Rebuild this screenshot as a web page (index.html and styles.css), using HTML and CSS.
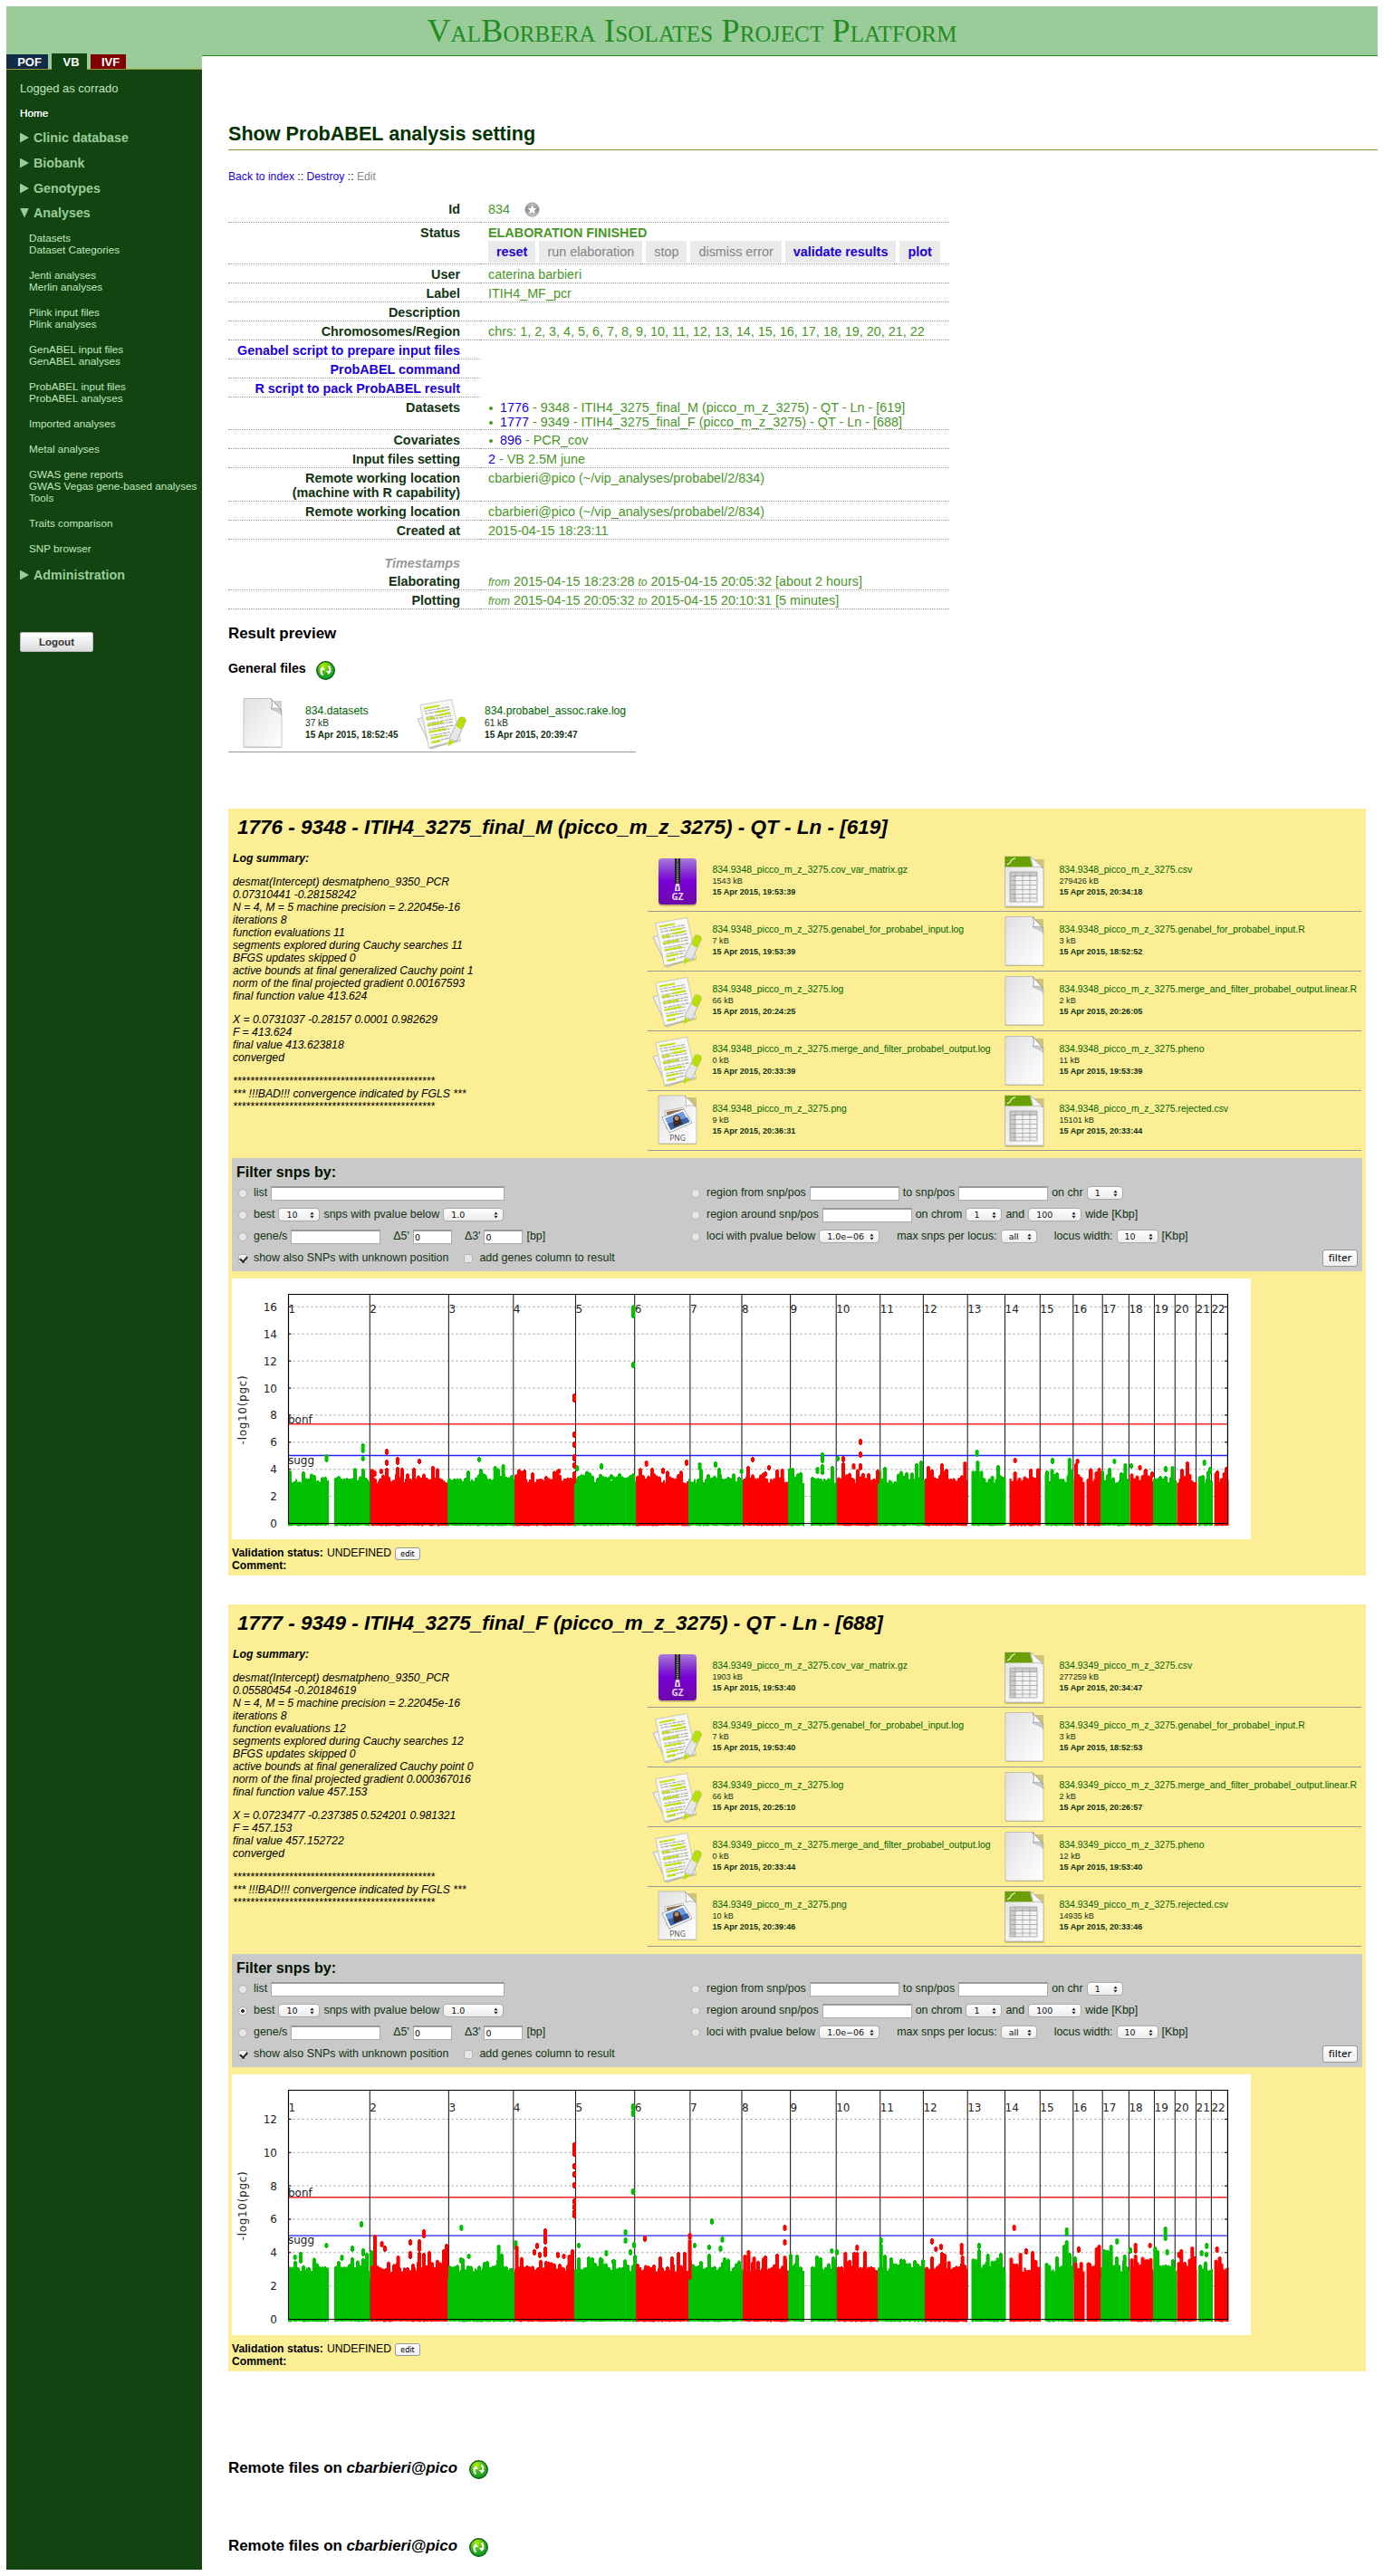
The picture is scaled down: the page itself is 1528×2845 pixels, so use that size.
FILE: index.html
```html
<!DOCTYPE html>
<html lang="en">
<head>
<meta charset="utf-8">
<title>ValBorbera Isolates Project Platform</title>
<link rel="stylesheet" href="styles.css">
</head>
<body>
<svg class="sprite" aria-hidden="true">
  <defs>
    <linearGradient id="paper" x1="0" y1="0" x2="1" y2="1"><stop offset="0" stop-color="#e0e0e0"/><stop offset=".45" stop-color="#efefef"/><stop offset="1" stop-color="#fff"/></linearGradient>
    <linearGradient id="purple" x1="0" y1="0" x2="0" y2="1"><stop offset="0" stop-color="#a87bdc"/><stop offset=".28" stop-color="#8634d2"/><stop offset=".5" stop-color="#7b00d8"/><stop offset="1" stop-color="#6c0aa6"/></linearGradient>
    <radialGradient id="lime" cx=".4" cy=".25" r=".8"><stop offset="0" stop-color="#b4f000"/><stop offset=".5" stop-color="#3fb51c"/><stop offset="1" stop-color="#00962c"/></radialGradient>
    <linearGradient id="silver" x1="0" y1="0" x2="0" y2="1"><stop offset="0" stop-color="#c8c8c8"/><stop offset=".5" stop-color="#8c8c8c"/><stop offset="1" stop-color="#cfcfcf"/></linearGradient>
    <symbol id="doc" viewBox="0 0 58 58">
      <path d="M8 4h42v52H8z" fill="#000" opacity=".18"/>
      <path d="M8 1.500h30L50 15v40H8z" fill="url(#paper)" stroke="#b0b0a8" stroke-width=".7"/>
      <path d="M38 1.500c2 4 1.500 8 .5 11.500 4-1.500 8-1 11.500 2z" fill="#fff" stroke="#8c8c8c" stroke-width=".8"/>
      <path d="M38 13.500c4-1 8-1 12 2v5c-3-4-8-5-12-7z" fill="#777" opacity=".35"/>
    </symbol>
    <symbol id="log" viewBox="0 -1 60 60">
      <path d="M2 24l12-4 26 30-22 8z" fill="#efefef" stroke="#aaa" stroke-width=".8"/>
      <path d="M5 8L40 2l12 48-37 8z" fill="#000" opacity=".13"/>
      <path d="M5 8L41 1.500l10 46-36 9z" fill="#f7f7f5" stroke="#b8b8b0" stroke-width=".7"/>
      <g stroke="#aaa" stroke-width="1.200" stroke-dasharray="3 1 5 1">
        <path d="M10 15l28-5M11 18l28-5M12 22l28-5M13 25l28-5M14 29l28-5M14 32l28-5M15 36l28-5M16 39l24-4M17 43l22-4M18 46l20-4M19 50l18-4"/>
      </g>
      <path d="M9 12l18-3.500M23 16l12-2M12 24l10-2M25 20l14-3M13 31l18-3.500M15 39l20-4M17 46l14-3M18 51l10-2" stroke="#c3e012" stroke-width="2.200"/>
      <path d="M50 22c5-1 8 1 7 5L46 50l-8-4z" fill="#e6e7e7" stroke="#999" stroke-width=".7"/>
      <path d="M50 22c5-1 8 1 7 5l-5 9-6-4z" fill="#b5e000"/>
      <path d="M38 47l6 3.500-7 4.500z" fill="#b5e000"/>
    </symbol>
    <symbol id="gz" viewBox="0 0 58 58">
      <rect x="8" y="4" width="42" height="52" rx="4" fill="#000" opacity=".2"/>
      <rect x="8" y="3" width="42" height="51" rx="4" fill="url(#purple)"/>
      <path d="M29 3v28" stroke="#222" stroke-width="6"/>
      <path d="M29 3v28" stroke="#999" stroke-width="2.200" stroke-dasharray="1.200 1"/>
      <path d="M27 31h4l1.200 8h-6.400z" fill="#d8cce4"/><path d="M28.300 34h1.400v4h-1.400z" fill="#5b0f95"/>
      <text x="29" y="49" class="gz-text" text-anchor="middle">GZ</text>
    </symbol>
    <symbol id="csv" viewBox="0 0 58 58">
      <path d="M7.500 4h43v54h-43z" fill="#000" opacity=".18"/>
      <path d="M7.500 1H36l14 13v42h-42.500z" fill="url(#paper)" stroke="#aaa" stroke-width=".7"/>
      <path d="M7.500 1H35l3 11.500H7.500z" fill="#6a9f08"/>
      <path d="M10 10l3-2 2-3.500 4-2" stroke="#e8f2c8" stroke-width="1.300" fill="none"/>
      <path d="M36 1l14 13c-4-2-8-2.500-11-1z" fill="#fafafa" stroke="#999" stroke-width=".6"/>
      <path d="M13 18h30v33H13z" fill="#f2f2f2"/>
      <path d="M13 18h30v4.500H13zM13 18h6v33h-6z" fill="#cacaca"/>
      <path d="M13 18h30v33H13zM19 18v33M27 18v33M35 18v33M13 22.500h30M13 27.500h30M13 32.500h30M13 37.500h30M13 42.500h30M13 47h30" fill="none" stroke="#a2a2a2" stroke-width=".8"/>
    </symbol>
    <symbol id="png" viewBox="0 0 58 58">
      <path d="M8 3h42v52H8z" fill="#000" opacity=".18"/>
      <path d="M8 1h29l13 13v40H8z" fill="url(#paper)" stroke="#b0b0a8" stroke-width=".7"/>
      <path d="M37 1c2 4 2 8 1 12 4-2 8-2 12 1z" fill="#fff" stroke="#999" stroke-width=".7"/>
      <path d="M15 18l20-4 4 20-22 4z" fill="#f2eee4" stroke="#999" stroke-width=".6"/><path d="M17 19l17-3 1 7-17 3z" fill="#8a6a50"/>
      <path d="M12 25l24-9 9 15-25 11z" fill="#fff" stroke="#888" stroke-width=".7"/>
      <path d="M15 26l20-7.500 7 11.500L21.500 39z" fill="#6d9be0"/><path d="M18 32l22-7 2.500 5-21 9z" fill="#3c62a8"/>
      <path d="M24 26c2-5 7-4 8 0l3 6-10 4z" fill="#3b2a24"/><circle cx="28" cy="26" r="2.500" fill="#bd8a67"/>
      <text x="29" y="50.500" class="png-text" text-anchor="middle">PNG</text>
    </symbol>
    <symbol id="refresh" viewBox="0 0 21 21">
      <circle cx="10.500" cy="10.500" r="9.800" fill="url(#lime)" stroke="#07520a" stroke-width="1.200"/>
      <path d="M7.500 15.500A5 5 0 0 1 6.500 9M13.500 5.500A5 5 0 0 1 14.500 12" fill="none" stroke="#fff" stroke-width="2"/>
      <path d="M3.800 10L7 6 10 10zM11 11h6.200L14 15z" fill="#fff"/>
    </symbol>
    <symbol id="star" viewBox="0 0 18 18">
      <circle cx="9" cy="9" r="8" fill="url(#silver)" stroke="#8a8a8a" stroke-width=".9"/>
      <path d="M9 3.800l1.600 3.400 3.700.4-2.800 2.500.8 3.700L9 12l-3.300 1.800.8-3.700-2.800-2.500 3.700-.4z" fill="#fff"/>
    </symbol>
    <symbol id="updown" viewBox="0 0 6 9"><path d="M.5 3.700L3 .3l2.500 3.400zM.5 5.300L3 8.700l2.500-3.400z" fill="#222"/></symbol>
  </defs>
</svg>

<header class="banner"><h1>ValBorbera Isolates Project Platform</h1></header>

<div class="page">
  <nav class="sidebar">
    <div class="tabs"><a class="tab pof">POF</a><a class="tab vb">VB</a><a class="tab ivf">IVF</a></div>
    <div class="menu">
      <p class="logged">Logged as corrado</p>
      <p class="home">Home</p>
      <h3><i class="tri"></i>Clinic database</h3>
      <h3><i class="tri"></i>Biobank</h3>
      <h3><i class="tri"></i>Genotypes</h3>
      <h3 class="open"><i class="tri down"></i>Analyses</h3>
      <ul><li>Datasets</li><li>Dataset Categories</li></ul>
      <ul><li>Jenti analyses</li><li>Merlin analyses</li></ul>
      <ul><li>Plink input files</li><li>Plink analyses</li></ul>
      <ul><li>GenABEL input files</li><li>GenABEL analyses</li></ul>
      <ul><li>ProbABEL input files</li><li>ProbABEL analyses</li></ul>
      <ul><li>Imported analyses</li></ul>
      <ul><li>Metal analyses</li></ul>
      <ul><li>GWAS gene reports</li><li>GWAS Vegas gene-based analyses</li><li>Tools</li></ul>
      <ul><li>Traits comparison</li></ul>
      <ul><li>SNP browser</li></ul>
      <h3 class="admin"><i class="tri"></i>Administration</h3>
      <button class="logout">Logout</button>
    </div>
  </nav>

  <main class="content">
    <h2 class="title">Show ProbABEL analysis setting</h2>
    <p class="links"><a>Back to index</a> :: <a>Destroy</a> :: <span class="off">Edit</span></p>

    <div class="details">
      <div class="row id"><div class="k">Id</div><div class="v">834<svg class="star"><use href="#star"/></svg></div></div>
      <div class="row status"><div class="k">Status</div><div class="v"><b>ELABORATION FINISHED</b>
        <div class="actions"><a>reset</a><span>run elaboration</span><span>stop</span><span>dismiss error</span><a>validate results</a><a>plot</a></div></div></div>
      <div class="row"><div class="k">User</div><div class="v">caterina barbieri</div></div>
      <div class="row"><div class="k">Label</div><div class="v">ITIH4_MF_pcr</div></div>
      <div class="row"><div class="k">Description</div><div class="v"></div></div>
      <div class="row"><div class="k">Chromosomes/Region</div><div class="v">chrs: 1, 2, 3, 4, 5, 6, 7, 8, 9, 10, 11, 12, 13, 14, 15, 16, 17, 18, 19, 20, 21, 22</div></div>
      <div class="row"><div class="k link">Genabel script to prepare input files</div></div>
      <div class="row"><div class="k link">ProbABEL command</div></div>
      <div class="row"><div class="k link">R script to pack ProbABEL result</div></div>
      <div class="row sets"><div class="k">Datasets</div><div class="v"><div class="item"><a>1776</a> - 9348 - ITIH4_3275_final_M (picco_m_z_3275) - QT - Ln - [619]</div><div class="item"><a>1777</a> - 9349 - ITIH4_3275_final_F (picco_m_z_3275) - QT - Ln - [688]</div></div></div>
      <div class="row"><div class="k">Covariates</div><div class="v"><div class="item"><a>896</a> - PCR_cov</div></div></div>
      <div class="row"><div class="k">Input files setting</div><div class="v"><a>2</a> - VB 2.5M june</div></div>
      <div class="row"><div class="k">Remote working location<br>(machine with R capability)</div><div class="v">cbarbieri@pico (~/vip_analyses/probabel/2/834)</div></div>
      <div class="row"><div class="k">Remote working location</div><div class="v">cbarbieri@pico (~/vip_analyses/probabel/2/834)</div></div>
      <div class="row"><div class="k">Created at</div><div class="v">2015-04-15 18:23:11</div></div>
      <div class="stamps">Timestamps</div>
      <div class="row"><div class="k">Elaborating</div><div class="v"><i>from</i> 2015-04-15 18:23:28 <i>to</i> 2015-04-15 20:05:32 [about 2 hours]</div></div>
      <div class="row"><div class="k">Plotting</div><div class="v"><i>from</i> 2015-04-15 20:05:32 <i>to</i> 2015-04-15 20:10:31 [5 minutes]</div></div>
    </div>

    <h3 class="preview">Result preview</h3>
    <h4 class="general">General files<svg class="refresh"><use href="#refresh"/></svg></h4>
    <div class="general-files">
      <div class="file"><svg><use href="#doc"/></svg><div><a>834.datasets</a><span>37 kB</span><b>15 Apr 2015, 18:52:45</b></div></div>
      <div class="file"><svg><use href="#log"/></svg><div><a>834.probabel_assoc.rake.log</a><span>61 kB</span><b>15 Apr 2015, 20:39:47</b></div></div>
    </div>

    <section class="panel">
      <h3>1776 - 9348 - ITIH4_3275_final_M (picco_m_z_3275) - QT - Ln - [619]</h3>
      <div class="summary">
        <div class="log">
          <p><b>Log summary:</b></p>
          <p>desmat(Intercept) desmatpheno_9350_PCR<br>0.07310441 -0.28158242<br>N = 4, M = 5 machine precision = 2.22045e-16<br>iterations 8<br>function evaluations 11<br>segments explored during Cauchy searches 11<br>BFGS updates skipped 0<br>active bounds at final generalized Cauchy point 1<br>norm of the final projected gradient 0.00167593<br>final function value 413.624</p>
          <p>X = 0.0731037 -0.28157 0.0001 0.982629<br>F = 413.624<br>final value 413.623818<br>converged</p>
          <p>***********************************************<br>*** !!!BAD!!! convergence indicated by FGLS ***<br>***********************************************</p>
        </div>
        <div class="files">
          <div class="file"><svg><use href="#gz"/></svg><div><a>834.9348_picco_m_z_3275.cov_var_matrix.gz</a><span>1543 kB</span><b>15 Apr 2015, 19:53:39</b></div></div>
          <div class="file"><svg><use href="#csv"/></svg><div><a>834.9348_picco_m_z_3275.csv</a><span>279426 kB</span><b>15 Apr 2015, 20:34:18</b></div></div>
          <div class="file"><svg><use href="#log"/></svg><div><a>834.9348_picco_m_z_3275.genabel_for_probabel_input.log</a><span>7 kB</span><b>15 Apr 2015, 19:53:39</b></div></div>
          <div class="file"><svg><use href="#doc"/></svg><div><a>834.9348_picco_m_z_3275.genabel_for_probabel_input.R</a><span>3 kB</span><b>15 Apr 2015, 18:52:52</b></div></div>
          <div class="file"><svg><use href="#log"/></svg><div><a>834.9348_picco_m_z_3275.log</a><span>66 kB</span><b>15 Apr 2015, 20:24:25</b></div></div>
          <div class="file"><svg><use href="#doc"/></svg><div><a>834.9348_picco_m_z_3275.merge_and_filter_probabel_output.linear.R</a><span>2 kB</span><b>15 Apr 2015, 20:26:05</b></div></div>
          <div class="file"><svg><use href="#log"/></svg><div><a>834.9348_picco_m_z_3275.merge_and_filter_probabel_output.log</a><span>0 kB</span><b>15 Apr 2015, 20:33:39</b></div></div>
          <div class="file"><svg><use href="#doc"/></svg><div><a>834.9348_picco_m_z_3275.pheno</a><span>11 kB</span><b>15 Apr 2015, 19:53:39</b></div></div>
          <div class="file"><svg><use href="#png"/></svg><div><a>834.9348_picco_m_z_3275.png</a><span>9 kB</span><b>15 Apr 2015, 20:36:31</b></div></div>
          <div class="file"><svg><use href="#csv"/></svg><div><a>834.9348_picco_m_z_3275.rejected.csv</a><span>15101 kB</span><b>15 Apr 2015, 20:33:44</b></div></div>
        </div>
      </div>
      <form class="filter">
        <h4>Filter snps by:</h4>
        <div class="cols">
          <div class="col">
            <div class="line"><i class="radio"></i>list<input class="w-list"></div>
            <div class="line"><i class="radio"></i>best<span class="select w46">10<svg><use href="#updown"/></svg></span>snps with pvalue below<span class="select w67">1.0<svg><use href="#updown"/></svg></span></div>
            <div class="line"><i class="radio"></i>gene/s<input class="w99"><span class="delta">Δ5'</span><input class="w43" value="0"><span class="delta">Δ3'</span><input class="w43" value="0">[bp]</div>
            <div class="line"><i class="check on"></i>show also SNPs with unknown position<i class="check second"></i>add genes column to result</div>
          </div>
          <div class="col">
            <div class="line"><i class="radio"></i>region from snp/pos<input class="w99">to snp/pos<input class="w99">on chr<span class="select w40">1<svg><use href="#updown"/></svg></span></div>
            <div class="line"><i class="radio"></i>region around snp/pos<input class="w99">on chrom<span class="select w40">1<svg><use href="#updown"/></svg></span>and<span class="select w59">100<svg><use href="#updown"/></svg></span>wide [Kbp]</div>
            <div class="line"><i class="radio"></i>loci with pvalue below<span class="select w67">1.0e−06<svg><use href="#updown"/></svg></span><span class="gap-l">max snps per locus:</span><span class="select w40">all<svg><use href="#updown"/></svg></span><span class="gap-l">locus width:</span><span class="select w46">10<svg><use href="#updown"/></svg></span>[Kbp]</div>
            <div class="line end"><button type="button" class="go">filter</button></div>
          </div>
        </div>
      </form>
      <svg class="plot" id="plot-m" viewBox="0 0 1125 288"></svg>
      <p class="validation"><b>Validation status:</b> UNDEFINED <button class="edit">edit</button></p>
      <p class="validation"><b>Comment:</b></p>
    </section>

    <section class="panel">
      <h3>1777 - 9349 - ITIH4_3275_final_F (picco_m_z_3275) - QT - Ln - [688]</h3>
      <div class="summary">
        <div class="log">
          <p><b>Log summary:</b></p>
          <p>desmat(Intercept) desmatpheno_9350_PCR<br>0.05580454 -0.20184619<br>N = 4, M = 5 machine precision = 2.22045e-16<br>iterations 8<br>function evaluations 12<br>segments explored during Cauchy searches 12<br>BFGS updates skipped 0<br>active bounds at final generalized Cauchy point 0<br>norm of the final projected gradient 0.000367016<br>final function value 457.153</p>
          <p>X = 0.0723477 -0.237385 0.524201 0.981321<br>F = 457.153<br>final value 457.152722<br>converged</p>
          <p>***********************************************<br>*** !!!BAD!!! convergence indicated by FGLS ***<br>***********************************************</p>
        </div>
        <div class="files">
          <div class="file"><svg><use href="#gz"/></svg><div><a>834.9349_picco_m_z_3275.cov_var_matrix.gz</a><span>1903 kB</span><b>15 Apr 2015, 19:53:40</b></div></div>
          <div class="file"><svg><use href="#csv"/></svg><div><a>834.9349_picco_m_z_3275.csv</a><span>277259 kB</span><b>15 Apr 2015, 20:34:47</b></div></div>
          <div class="file"><svg><use href="#log"/></svg><div><a>834.9349_picco_m_z_3275.genabel_for_probabel_input.log</a><span>7 kB</span><b>15 Apr 2015, 19:53:40</b></div></div>
          <div class="file"><svg><use href="#doc"/></svg><div><a>834.9349_picco_m_z_3275.genabel_for_probabel_input.R</a><span>3 kB</span><b>15 Apr 2015, 18:52:53</b></div></div>
          <div class="file"><svg><use href="#log"/></svg><div><a>834.9349_picco_m_z_3275.log</a><span>66 kB</span><b>15 Apr 2015, 20:25:10</b></div></div>
          <div class="file"><svg><use href="#doc"/></svg><div><a>834.9349_picco_m_z_3275.merge_and_filter_probabel_output.linear.R</a><span>2 kB</span><b>15 Apr 2015, 20:26:57</b></div></div>
          <div class="file"><svg><use href="#log"/></svg><div><a>834.9349_picco_m_z_3275.merge_and_filter_probabel_output.log</a><span>0 kB</span><b>15 Apr 2015, 20:33:44</b></div></div>
          <div class="file"><svg><use href="#doc"/></svg><div><a>834.9349_picco_m_z_3275.pheno</a><span>12 kB</span><b>15 Apr 2015, 19:53:40</b></div></div>
          <div class="file"><svg><use href="#png"/></svg><div><a>834.9349_picco_m_z_3275.png</a><span>10 kB</span><b>15 Apr 2015, 20:39:46</b></div></div>
          <div class="file"><svg><use href="#csv"/></svg><div><a>834.9349_picco_m_z_3275.rejected.csv</a><span>14935 kB</span><b>15 Apr 2015, 20:33:46</b></div></div>
        </div>
      </div>
      <form class="filter">
        <h4>Filter snps by:</h4>
        <div class="cols">
          <div class="col">
            <div class="line"><i class="radio"></i>list<input class="w-list"></div>
            <div class="line"><i class="radio on"></i>best<span class="select w46">10<svg><use href="#updown"/></svg></span>snps with pvalue below<span class="select w67">1.0<svg><use href="#updown"/></svg></span></div>
            <div class="line"><i class="radio"></i>gene/s<input class="w99"><span class="delta">Δ5'</span><input class="w43" value="0"><span class="delta">Δ3'</span><input class="w43" value="0">[bp]</div>
            <div class="line"><i class="check on"></i>show also SNPs with unknown position<i class="check second"></i>add genes column to result</div>
          </div>
          <div class="col">
            <div class="line"><i class="radio"></i>region from snp/pos<input class="w99">to snp/pos<input class="w99">on chr<span class="select w40">1<svg><use href="#updown"/></svg></span></div>
            <div class="line"><i class="radio"></i>region around snp/pos<input class="w99">on chrom<span class="select w40">1<svg><use href="#updown"/></svg></span>and<span class="select w59">100<svg><use href="#updown"/></svg></span>wide [Kbp]</div>
            <div class="line"><i class="radio"></i>loci with pvalue below<span class="select w67">1.0e−06<svg><use href="#updown"/></svg></span><span class="gap-l">max snps per locus:</span><span class="select w40">all<svg><use href="#updown"/></svg></span><span class="gap-l">locus width:</span><span class="select w46">10<svg><use href="#updown"/></svg></span>[Kbp]</div>
            <div class="line end"><button type="button" class="go">filter</button></div>
          </div>
        </div>
      </form>
      <svg class="plot" id="plot-f" viewBox="0 0 1125 288"></svg>
      <p class="validation"><b>Validation status:</b> UNDEFINED <button class="edit">edit</button></p>
      <p class="validation"><b>Comment:</b></p>
    </section>

    <h3 class="remote">Remote files on <i>cbarbieri@pico</i><svg class="refresh"><use href="#refresh"/></svg></h3>
    <h3 class="remote again">Remote files on <i>cbarbieri@pico</i><svg class="refresh"><use href="#refresh"/></svg></h3>
  </main>
</div>
<script src="plots.js"></script>
</body>
</html>
```
FILE: styles.css
```css
* { box-sizing: border-box; }
body { margin: 7px 7px 0; background: #fff; color: #000; font: 12.200px/14px "Liberation Sans", Arial, Helvetica, sans-serif; }
h1, h2, h3, h4, p, ul { margin: 0; padding: 0; }
a { color: #1a00dd; }
.sprite { position: absolute; width: 0; height: 0; }
.gz-text { font: bold 10px "Open Sans", sans-serif; fill: #e6d8f4; }
.png-text { font: 8.500px "Open Sans", sans-serif; fill: #555; }

.banner { height: 54px; background: #9c9; text-align: center; }
.banner h1 { font: 36px/54px "Liberation Serif", "Times New Roman", serif; font-variant: small-caps; color: #228b22; letter-spacing: .17px; }
.page { display: flex; height: 2777px; }

/* sidebar */
.sidebar { flex: 0 0 216px; background: #114411; color: #cfc; }
.tabs { display: flex; align-items: flex-end; height: 16px; background: #9c9; border-bottom: 1px solid #993; }
.tab { height: 16px; margin-right: 4px; color: #fff; font-size: 13px; font-weight: bold; line-height: 17px; text-align: center; }
.pof { width: 46px; background: #122b46; padding-left: 5px; }
.vb { width: 39px; height: 18px; margin-bottom: -1px; background: #141; padding-left: 4px; line-height: 19px; }
.ivf { width: 39px; background: #800000; padding-left: 5px; }
.menu { padding: 13px 0 0 15px; }
.logged { font-size: 13px; line-height: 16px; color: #c2e6bd; }
.home { margin-top: 11px; font-size: 11.700px; line-height: 16px; color: #fff; text-shadow: 0 0 .5px #fff; }
.menu h3 { display: flex; align-items: center; margin-top: 12px; font-size: 14.300px; line-height: 16px; color: #9c9; }
.menu .home + h3 { margin-top: 11px; }
.menu h3.open { margin-top: 11px; margin-bottom: 13px; }
.menu h3.admin { margin-top: 4px; }
.tri { width: 10px; height: 11px; margin-right: 5px; background: #9c9; clip-path: polygon(0 0, 100% 50%, 0 100%); }
.tri.down { clip-path: polygon(0 0, 100% 0, 50% 100%); }
.menu ul { margin: 0 0 15px 10px; list-style: none; font-size: 11.700px; line-height: 13px; color: #c2e6bd; white-space: nowrap; }
.logout { display: block; width: 81px; height: 22px; margin-top: 55px; padding: 0; border: 1px solid #bbb; border-radius: 2px; background: linear-gradient(#fff, #dcdcdc); color: #333; font: bold 11.500px "Liberation Sans", sans-serif; }

/* main column */
.content { flex: 1; margin-left: 0; padding: 73px 0 0 29px; border-top: 1px solid #228b22; }
.title { padding-bottom: 4px; border-bottom: 1px solid #993; font-size: 21.600px; line-height: 26px; color: #030; }
.links { margin-top: 21px; font-size: 12.160px; line-height: 16px; }
.off { color: #888; }

.details { width: 796px; margin-top: 14px; font-size: 14.380px; line-height: 16px; }
.row { display: flex; }
.k, .v { border-bottom: 1px dotted #999; padding: 3px 0 1px; min-height: 21px; }
.k { width: 278px; padding-right: 22px; font-weight: bold; text-align: right; color: #131; }
.v { width: 518px; padding-left: 9px; color: #4a9628; white-space: nowrap; }
.k.link { color: #1a00dd; }
.v i { font-size: 12px; line-height: 0; }
.id .k, .id .v { height: 29px; padding-top: 6px; }
.id .v { display: flex; }
.star { width: 17px; height: 17px; margin: 0 0 0 16px; }
.status .k, .status .v { height: 46px; }
.actions { display: flex; gap: 4px; margin-top: 1px; }
.actions > * { padding: 0 9px; background: #eaeaea; color: #848484; line-height: 24px; }
.actions a { color: #1a00dd; font-weight: bold; }
.sets .k, .sets .v { height: 36px; }
.item { position: relative; padding-left: 13px; }
.item::before { content: ""; position: absolute; left: 1px; top: 7px; width: 4px; height: 4px; border-radius: 2px; background: #4a9628; }
.stamps { width: 278px; height: 35px; padding: 18px 22px 0 0; text-align: right; font-weight: bold; font-style: italic; color: #999; }

.preview { margin-top: 17px; font-size: 16.900px; line-height: 20px; }
.general { display: flex; align-items: center; height: 20px; margin-top: 18px; font-size: 14.300px; line-height: 20px; }
.refresh { width: 21px; height: 21px; margin: 4px 0 0 11px; }
.general-files { display: grid; grid-template-columns: 198px 252px; width: 450px; height: 64px; margin: 19px 0 62px; border-bottom: 1px solid #999; }
.file { display: flex; align-items: center; }
.file svg { width: 58px; height: 58px; margin-left: 4px; flex: none; }
.file div { display: flex; flex-direction: column; margin: 0 0 1px 9.500px; white-space: nowrap; }
.file a { color: #006400; font-size: 10.430px; line-height: 13px; }
.file span { color: #131; font-size: 9.100px; line-height: 12px; }
.file b { color: #131; font-size: 9.050px; line-height: 13px; }
.general-files svg { margin-left: 9px; }
.general-files .file div { margin-left: 18px; }
.general-files a { font-size: 12.160px; line-height: 14px; }
.general-files span, .general-files b { font-size: 10.130px; line-height: 13px; }

/* dataset panels */
.panel { width: 1256px; height: 847px; margin-bottom: 32px; padding: 8px 4px 0; background: #fbee95; }
.panel > h3 { padding-left: 6px; font-size: 22.500px; font-style: italic; line-height: 26px; }
.summary { display: flex; height: 330px; margin-top: 14px; }
.log { width: 459px; padding-left: 1px; font-style: italic; white-space: nowrap; }
.log p { margin-bottom: 12px; }
.files { display: grid; grid-template-columns: 383px 405px; grid-auto-rows: 66px; width: 788px; }
.files .file { border-bottom: 1px solid #999; }

.filter { height: 125px; margin: 8px 0; padding: 5px 5px 0; background: #c9c9c9; color: #131; font-size: 12.430px; }
.filter h4 { font-size: 16.130px; line-height: 20px; color: #010; }
.cols { display: grid; grid-template-columns: 500px 1fr; margin-top: 1px; }
.line { display: flex; align-items: center; height: 24px; white-space: nowrap; }
.line.end { justify-content: flex-end; }
.radio, .check { width: 10px; height: 10px; margin: 1px 7px 0 2px; border: 1px solid #b4b4b4; background: #e6e6e6; border-radius: 50%; }
.check { border-radius: 2px; }
.check.second { margin-left: 17px; }
.radio.on { background: radial-gradient(#333 0 1.800px, #f0f0f0 2.200px); }
.check.on { background: #eee; position: relative; }
.check.on::after { content: ""; position: absolute; left: 2px; top: 0; width: 4px; height: 6px; border: solid #222; border-width: 0 2px 2px 0; transform: rotate(40deg); }
.line input { height: 16px; margin: 1px 4px 0; padding: 0 1px; border: 1px solid #aaa; border-top: 2px solid #999; background: #fff; font: 9.500px "DejaVu Sans", sans-serif; }
.w-list { width: 258px; }
.w99 { width: 99px; }
.w43 { width: 43px; }
.delta { margin-left: 10px; }
.gap-l { margin-left: 15px; }
.select { display: flex; align-items: center; justify-content: space-between; height: 15px; margin: 1px 4px 0; padding: 0 5px 0 8px; border: 1px solid #aaa; border-radius: 4px; background: linear-gradient(#fff, #ececec); font: 9.500px/13px "DejaVu Sans", sans-serif; color: #111; }
.select svg { width: 5px; height: 8px; }
.w40 { width: 40px; }
.w46 { width: 46px; }
.w59 { width: 59px; }
.w67 { width: 67px; }
.go { width: 39px; height: 19px; padding: 0; border: 1px solid #999; border-radius: 3px; background: linear-gradient(#fff, #eee); color: #000; font: 11.500px "Noto Sans", sans-serif; line-height: 16px; }
.plot { display: block; width: 1125px; height: 288px; margin-bottom: 8px; background: #fff; }
.plot text { font: 12px "DejaVu Sans", sans-serif; fill: #222; }
.plot .axis { letter-spacing: .7px; }
.validation { display: flex; align-items: center; gap: 4px; height: 14px; }
.edit { width: 28px; height: 14px; padding: 0; border: 1px solid #999; border-radius: 3px; background: linear-gradient(#fff, #eee); font: 8.500px/10px "Noto Sans", sans-serif; margin-top: 1px; }

.remote { display: flex; align-items: center; height: 20px; margin-top: 97px; font-size: 16.900px; white-space: pre; }
.remote.again { margin-top: 66px; }
.remote .refresh { margin: 2px 0 0 13px; }
```
FILE: plots.js
```js
// Manhattan plots: chromosome bounds, filled ranges and the stand-out markers.
const LINES = [62.5, 152.3, 239.4, 310.8, 379.5, 444.7, 505.9, 563, 616.6, 667.2, 715.7, 763.4, 812.2, 853.5, 892.3, 928.8, 961.2, 990.4, 1018.5, 1041.3, 1064.5, 1081.4, 1099.4];
const BODY = [[62, 107], [113, 152.5], [153, 238], [238, 312], [312, 378], [378, 446], [446, 504], [504, 564], [564, 614], [614, 632], [639, 667.5], [668, 713], [713, 765], [765, 812], [816.5, 854.5], [858.5, 893], [897.5, 929], [929.5, 941.5], [943.5, 959], [959, 991.500], [991.5, 1017], [1017, 1043.5], [1043.5, 1065.500], [1067, 1083], [1084.6, 1100.500]];
const HUE = [0, 0, 1, 0, 1, 0, 1, 0, 1, 0, 0, 1, 0, 1, 0, 1, 0, 1, 1, 0, 1, 0, 1, 0, 1];
const COLORS = ['#00c000', '#ff0000'];
const FLOOR = 226;

const MALE = [[104.5,195,202],[144.7,183,192],[144.7,197,201],[171,189,194],[171,201,206],[171,210],[183,198,205],[183,209],[207,200,204],[157.7,213,218],[165,211,215],[188,210],[201,210],[222,208],[273,198,202],[275,211],[290.7,208],[299.6,206],[261,213],[280,218,222],[361,211,215],[323,212],[378,128,136],[378,170,175],[378,181,186],[378,195,201],[378,204,209],[378,214],[443,30.5,43,0],[443,93,98,0],[381,207,212,0],[408,205,210],[419,217,221],[428,216],[457.7,202,207],[464,210],[476,210,215],[502,201,206],[516.6,204,211],[534,203,208],[538,210],[526,217,222],[562.6,211,215,0],[575,198,202],[570,208],[593,207,211],[589,214,218],[607.7,211],[619,210],[652,193,203],[652,206,216],[646.5,209,215],[663,208],[669,197,201],[675,197,202],[675,204],[686.5,205,210],[694,178,183],[694,192,197],[694,205,211],[721,209],[756,205],[761,202],[713,212],[769,208],[784,205],[789,211],[809.4,203],[822.6,190,196],[823.4,202],[846,207],[864.7,199,203],[864.7,214],[882,211],[890,211],[906,199,204],[924.8,199],[933.6,200,204],[932,205],[900,213],[911,215],[948,211],[957.6,210],[974.4,200,204],[969,210],[986.4,205],[993,205,209],[1002.5,207,211],[1009,211],[1016,214,219],[1031,208,213],[1038.5,208],[1049,211],[1055,203],[1073.7,201,206],[1080,209,215],[1088,213],[1098,209]];
const FEMALE = [[104.4,187,191],[69.7,200,204],[76,197,208],[143,163,168],[133,190,195],[121.5,200,205],[145,193,200],[149,198],[158,178],[165.6,185,190],[169,190,195],[154,195],[197,183,188],[197,196,203],[207,183,195],[207,197],[212,172,180],[212,198],[218,196],[183.6,201],[234,194],[237,188],[253.4,167,172],[253,203,208],[261.6,199,203],[294.6,189],[298,199],[282,207],[313.4,184,193],[314.6,190],[334,194,199],[337,187,192],[340,197,202],[346,171,187],[346,191,201],[360,197,202],[366.5,199,203],[372.6,200],[376,194],[378,76,90,1],[378,99,104],[378,108,113],[378,120,125],[378,138,143],[378,144,149],[378,150,158],[442.8,33,39],[442.8,40,46],[442.8,127,132],[383,187,191],[394,202],[413.4,195,200],[408.5,204,208],[421,205,209],[434.6,172,177],[434.6,181,186],[440,194,199],[444,186,191],[445,200],[456,179,184],[473,202],[486,202],[493,197],[500,197],[505.6,176,182,1],[505.6,183,226,1],[511,187,191],[527,189,193],[527,199],[530,160,165],[539.5,190,195],[541.5,180,185],[544,203],[566.4,200],[570.5,195],[576.6,202],[589,201],[602,199],[610.5,167,172],[610.5,183,188],[610.5,201],[617,199],[624,200],[646,201],[650,203],[662.3,193,197],[664,202],[668,194,199],[677.3,197],[687,197],[690.3,189,194],[690.3,197],[699,196],[716.7,181,186],[716.7,188],[721,200],[728,203],[742,205],[763,205],[773,182,187],[773,202],[777.3,191,195],[783,188,193],[784,197],[787,199],[791.7,207],[805.7,187,199],[806.7,201],[825,187,192],[825,194],[834.7,199],[849,198],[863.7,167,172],[870.7,198],[877,193,198],[884,196],[921.7,170,178],[921.7,184],[919,189],[925,198],[911,202],[931,202],[935,191,196],[937.7,208],[947,209],[954.7,192],[957.5,189],[963.3,194],[970.7,189],[966.7,195],[977.3,182,187],[977,202],[985.7,200],[992,192,197],[997.7,187,197],[997.7,200],[1010.7,205],[1013.7,187,191],[1019.3,191],[1022,195],[1030.7,169,183],[1032.7,194,199],[1039,205],[1045.7,197,202],[1048.3,194],[1052,208],[1060.3,191],[1063,202],[1070.7,195,200],[1076.3,187,192],[1076,197,201],[1087.7,191,196],[1090.7,202]];

function hueAt(x) {
  for (let i = 0; i < BODY.length; i++) if (x <= BODY[i][1] + 2) return HUE[i];
  return 1;
}

function draw(id, opt) {
  let seed = opt.seed;
  const rnd = () => (seed = (seed * 16807) % 2147483647) / 2147483647;
  const paths = ['', ''];
  const out = [];
  for (let v = 2; v <= opt.max; v += 2) {
    const y = 270.5 - v * opt.unit;
    out.push(`<path d="M62.500 ${y}H1099" stroke="#999" stroke-dasharray="2 3"/><path d="M62.500 ${y}h3M1096 ${y}h3" stroke="#000"/>`);
  }
  for (let v = 0; v <= opt.max; v += 2) out.push(`<text x="50" y="${270.5 - v * opt.unit + 4.5}" text-anchor="end">${v}</text>`);
  out.push(`<path d="M62.500 ${opt.bonf}H1099" stroke="#f22" stroke-width="1.500"/><path d="M62.500 ${opt.sugg}H1099" stroke="#22f" stroke-width="1.300"/>`);
  LINES.forEach((x, i) => {
    out.push(`<path d="M${x} 17.500V270" stroke="#222" stroke-width="1.100"/>`);
    if (i < 22) out.push(`<text x="${x}" y="${opt.label}">${i + 1}</text>`);
  });
  out.push(`<text x="62" y="${opt.bonf - 1}">bonf</text><text x="62" y="${opt.sugg + 9}">sugg</text>`);
  BODY.forEach(([a, b], i) => {
    for (let x = a; x < b; x += 2) {
      const w = Math.min(2.2, b - x);
      const top = opt.body + 5 * rnd();
      paths[HUE[i]] += `M${x} ${top.toFixed(1)}h${w}V${(272.5 + rnd()).toFixed(1)}h-${w}z`;
    }
    // rounded marker columns that roughen the upper edge
    for (let x = a; x < b - 4; x += 3) {
      const r = rnd();
      if (r > .72) continue;
      const top = opt.body - 12 * r * r * 1.9 + 1;
      const t = top.toFixed(1);
      paths[HUE[i]] += `M${x} ${t}h4V${FLOOR}h-4zM${x + 1} ${(top - 1).toFixed(1)}h2v2h-2z`;
    }
  });
  opt.points.forEach(([x, t, b = FLOOR, h]) => {
    const c = h === undefined ? hueAt(x) : h;
    paths[c] += `M${x - 2} ${t}h4V${b}h-4zM${x - 1} ${t - 1}h2V${b + 1}h-2z`;
  });
  paths.forEach((d, i) => out.push(`<path d="${d}" fill="${COLORS[i]}"/>`));
  out.push('<path d="M62.500 17.500H1099.500V270.500H62.500z" fill="none" stroke="#000" stroke-width="1.100"/>');
  out.push(`<text class="axis" text-anchor="middle" transform="translate(16 ${opt.axis}) rotate(-90)">-log10(pgc)</text>`);
  document.getElementById(id).innerHTML = out.join('');
}

draw('plot-m', { unit: 14.95, max: 16, bonf: 160.7, sugg: 195.5, label: 37.5, body: 221, axis: 145, seed: 4711, points: MALE });
draw('plot-f', { unit: 18.42, max: 12, bonf: 135.7, sugg: 178.1, label: 40.5, body: 213, axis: 145, seed: 9349, points: FEMALE });
```
